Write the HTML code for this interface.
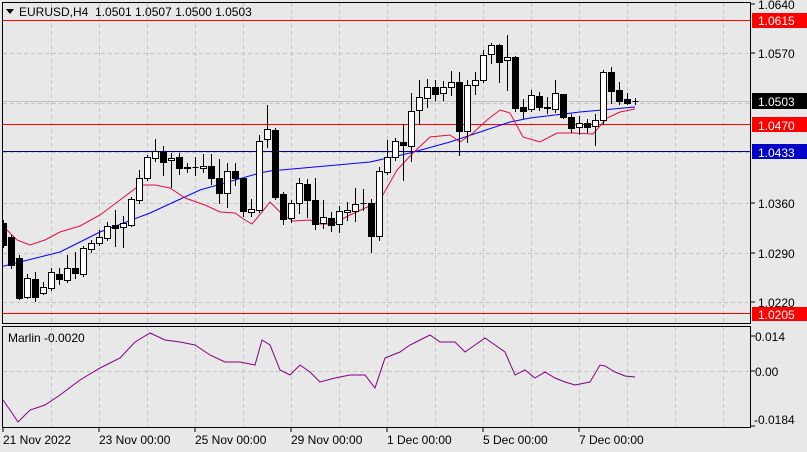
<!DOCTYPE html>
<html><head><meta charset="utf-8"><style>
html,body{margin:0;padding:0;background:#e8e8e8;width:807px;height:452px;overflow:hidden}
svg{display:block}
text{font-family:"Liberation Sans",Tahoma,sans-serif;font-size:12px;fill:#000}
</style></head><body>
<svg id="s" width="807" height="452" viewBox="0 0 807 452" xmlns="http://www.w3.org/2000/svg">
<rect width="807" height="452" fill="#e8e8e8"/>
<g id="grid" stroke="#c4c4c4" stroke-dasharray="4,3" stroke-width="1"></g>
<defs><clipPath id="cp"><rect x="3" y="3" width="747" height="320"/></clipPath></defs>
<!-- level lines -->
<line x1="3" y1="20.5" x2="750" y2="20.5" stroke="#ff0000"/>
<line x1="3" y1="124.5" x2="750" y2="124.5" stroke="#ff0000"/>
<line x1="3" y1="151.5" x2="750" y2="151.5" stroke="#000080"/>
<line x1="3" y1="313.5" x2="750" y2="313.5" stroke="#ff0000"/>
<line x1="3" y1="101.5" x2="750" y2="101.5" stroke="#c0c0c0"/>
<polyline fill="none" stroke="#0000ff" stroke-width="1" clip-path="url(#cp)" points="0,267 60,252 100,232 150,213 200,190 260,173 270,171 370,162 410,153 450,142 510,122 530,118 580,112 635,107"/>
<polyline fill="none" stroke="#e0103c" stroke-width="1" clip-path="url(#cp)" points="0,223 17,240 30,245 45,240 60,232 80,226 100,215 120,200 140,185 155,185 170,188 185,198 205,205 220,212 235,213 245,220 252,224 262,212 270,202 283,215 293,221 310,220 320,224 333,224 350,215 365,208 373,205 380,200 397,170 413,153 430,137 450,135 460,142 473,133 487,120 500,110 510,113 523,137 540,142 557,133 573,133 593,134 607,118 620,112 635,109"/>
<g id="c" clip-path="url(#cp)"></g>
<!-- frames -->
<rect x="2.5" y="2.5" width="748" height="321" fill="none" stroke="#000"/>
<rect x="2.5" y="326.5" width="748" height="101" fill="none" stroke="#000"/>
<polyline fill="none" stroke="#800080" stroke-width="1" points="3,400 10,410 18,422 30,410 45,405 60,395 80,380 100,368 120,358 135,342 150,333 165,340 180,342 195,345 210,355 225,362 240,362 255,365 262,340 270,345 280,370 290,375 300,365 310,372 320,382 335,378 350,375 365,375 375,388 385,358 400,352 410,345 420,340 430,335 440,342 455,342 465,352 475,345 485,338 495,345 505,352 515,375 525,370 535,378 545,372 555,378 565,382 575,385 590,382 600,365 605,366 615,372 625,376 635,377"/>
<!-- header -->
<path d="M6,9 L14,9 L10,14 Z" fill="#000"/>
<text x="19" y="16">EURUSD,H4&#160; 1.0501 1.0507 1.0500 1.0503</text>
<text x="8" y="342">Marlin -0.0020</text>
<!-- right axis -->
<g stroke="#000"><line x1="751" y1="4" x2="755" y2="4"/><line x1="751" y1="53" x2="755" y2="53"/><line x1="751" y1="203" x2="755" y2="203"/><line x1="751" y1="253" x2="755" y2="253"/><line x1="751" y1="302" x2="755" y2="302"/><line x1="751" y1="336" x2="755" y2="336"/><line x1="751" y1="371" x2="755" y2="371"/><line x1="751" y1="426" x2="755" y2="426"/></g>
<text x="758" y="9">1.0640</text>
<rect x="752" y="13" width="55" height="15" fill="#ff0000"/><text x="758" y="25" style="fill:#fff">1.0615</text>
<text x="758" y="58">1.0570</text>
<rect x="752" y="93" width="55" height="16" fill="#000"/><text x="758" y="106" style="fill:#fff">1.0503</text>
<rect x="752" y="117" width="55" height="15" fill="#ff0000"/><text x="758" y="130" style="fill:#fff">1.0470</text>
<rect x="752" y="144" width="55" height="15" fill="#0000c8"/><text x="758" y="157" style="fill:#fff">1.0433</text>
<text x="758" y="208">1.0360</text>
<text x="758" y="258">1.0290</text>
<text x="758" y="307">1.0220</text>
<rect x="752" y="307" width="55" height="14" fill="#ff0000"/><text x="758" y="319" style="fill:#fff">1.0205</text>
<text x="755" y="341">0.014</text>
<text x="755" y="376">0.00</text>
<text x="754" y="424">-0.0184</text>
<!-- time axis -->
<g stroke="#000"><line x1="3" y1="428" x2="3" y2="432"/><line x1="99" y1="428" x2="99" y2="432"/><line x1="195" y1="428" x2="195" y2="432"/><line x1="291" y1="428" x2="291" y2="432"/><line x1="387" y1="428" x2="387" y2="432"/><line x1="483" y1="428" x2="483" y2="432"/><line x1="579" y1="428" x2="579" y2="432"/></g>
<text x="3" y="444">21 Nov 2022</text>
<text x="99" y="444">23 Nov 00:00</text>
<text x="195" y="444">25 Nov 00:00</text>
<text x="291" y="444">29 Nov 00:00</text>
<text x="387" y="444">1 Dec 00:00</text>
<text x="483" y="444">5 Dec 00:00</text>
<text x="579" y="444">7 Dec 00:00</text>
</svg>
<script>
var NS="http://www.w3.org/2000/svg";
function el(p,t,a){var e=document.createElementNS(NS,t);for(var k in a)e.setAttribute(k,a[k]);p.appendChild(e);return e;}
var g=document.getElementById("grid");
for(var x=51;x<750;x+=48){el(g,"line",{x1:x+.5,y1:3,x2:x+.5,y2:323});el(g,"line",{x1:x+.5,y1:327,x2:x+.5,y2:427});}
[53,103,152,203,253,302].forEach(function(y){el(g,"line",{x1:3,y1:y+.5,x2:750,y2:y+.5});});
[371].forEach(function(y){el(g,"line",{x1:3,y1:y+.5,x2:750,y2:y+.5});});
var d=[
[3,'B',223,245,220,247],[11,'B',237,265,235,268],[19,'B',258,298,255,299],[27,'W',278,297,274,298],[35,'B',279,297,272,301],[43,'W',287,293,282,294],[51,'W',272,288,268,290],[59,'B',274,279,268,284],[67,'W',268,280,255,282],[75,'B',268,273,252,278],[83,'W',248,274,246,276],[91,'W',243,249,240,252],[99,'W',237,243,230,245],[107,'W',226,238,222,240],[115,'B',225,228,210,246],[123,'W',223,227,216,247],[131,'W',199,225,197,226],[139,'W',178,200,170,203],[147,'W',157,178,155,180],[155,'W',151,158,139,161],[163,'B',152,162,146,175],[171,'W',158,160,153,187],[179,'B',157,168,153,174],[187,'B',167,168,163,172],[195,'D',167,167,157,175],[203,'W',166,168,154,172],[211,'B',166,178,154,184],[219,'B',178,193,159,203],[227,'W',171,193,163,207],[235,'B',171,178,163,185],[243,'B',178,211,178,216],[251,'W',209,212,199,216],[259,'W',141,210,135,212],[267,'W',129,139,105,147],[275,'B',130,197,128,199],[283,'B',194,219,192,224],[291,'W',203,218,200,222],[299,'W',183,203,178,213],[307,'B',184,200,179,217],[315,'B',200,224,178,229],[323,'W',217,223,200,228],[331,'B',218,225,212,231],[339,'W',211,224,206,232],[347,'W',210,212,202,220],[355,'W',204,211,188,221],[363,'D',203,203,189,210],[371,'B',203,236,199,252],[379,'W',171,236,167,240],[387,'W',157,172,140,174],[395,'W',141,157,138,160],[403,'B',142,145,124,180],[411,'W',111,146,93,161],[419,'W',97,110,80,124],[427,'W',87,98,79,107],[435,'B',87,94,80,100],[443,'W',87,93,81,100],[451,'W',82,87,71,95],[459,'B',82,131,72,155],[467,'W',85,131,80,142],[475,'W',80,85,72,94],[483,'W',55,80,50,82],[491,'W',45,54,43,63],[499,'B',45,62,44,82],[507,'W',57,60,35,90],[515,'B',57,108,56,111],[523,'B',107,111,99,118],[531,'W',95,109,90,111],[539,'B',96,107,92,110],[547,'B',107,108,97,113],[555,'W',93,109,80,112],[563,'B',94,117,94,118],[571,'B',117,128,114,132],[579,'W',123,127,116,134],[587,'B',123,127,119,132],[595,'W',120,126,114,145],[603,'W',72,120,70,124],[611,'B',72,91,67,103],[619,'B',90,101,82,104],[627,'B',99,103,93,104],[635,'D',101,101,98,104]];
var c=document.getElementById("c");
d.forEach(function(a){var x=a[0]+.5;
el(c,"line",{x1:x,y1:a[4],x2:x,y2:a[5]+1,stroke:"#000"});
if(a[1]=='D'){el(c,"line",{x1:x-3,y1:a[2]+.5,x2:x+3,y2:a[2]+.5,stroke:"#000"});}
else{var h=Math.max(a[3]-a[2],1);el(c,"rect",{x:x-3,y:a[2]+.5,width:6,height:h,fill:a[1]=='B'?"#000":"#fff",stroke:"#000"});}
});
</script>
</body></html>
